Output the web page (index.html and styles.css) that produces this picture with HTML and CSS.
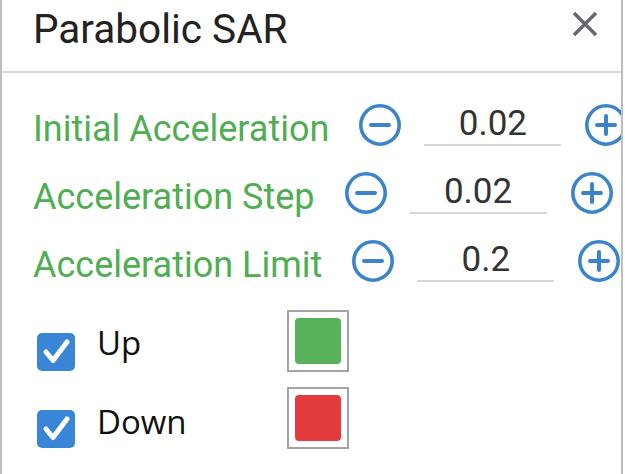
FILE: index.html
```html
<!DOCTYPE html>
<html lang="en">
<head>
<meta charset="utf-8">
<title>Parabolic SAR</title>
<link rel="stylesheet" href="styles.css">
</head>
<body>
<div class="panel">
  <header class="header">
    <h1 class="title">Parabolic SAR</h1>
    <button class="close" aria-label="Close">
      <svg width="26" height="26" viewBox="0 0 26 26"><path d="M2 2 L24 24 M24 2 L2 24" stroke="#66666e" stroke-width="3.4" fill="none"/></svg>
    </button>
  </header>
  <div class="content">
    <div class="params">
      <div class="param">
        <span class="label">Initial Acceleration</span>
        <button class="step" aria-label="Decrease"><svg width="42" height="42" viewBox="0 0 42 42"><circle cx="21" cy="21" r="19.2" fill="none" stroke="#3b84cc" stroke-width="3.6"/><path d="M12 21 H30" stroke="#3b84cc" stroke-width="4" stroke-linecap="round"/></svg></button>
        <div class="field">0.02</div>
        <button class="step" aria-label="Increase"><svg width="42" height="42" viewBox="0 0 42 42"><circle cx="21" cy="21" r="19.2" fill="none" stroke="#3b84cc" stroke-width="3.6"/><path d="M12 21 H30 M21 12 V30" stroke="#3b84cc" stroke-width="4" stroke-linecap="round"/></svg></button>
      </div>
      <div class="param">
        <span class="label">Acceleration Step</span>
        <button class="step" aria-label="Decrease"><svg width="42" height="42" viewBox="0 0 42 42"><circle cx="21" cy="21" r="19.2" fill="none" stroke="#3b84cc" stroke-width="3.6"/><path d="M12 21 H30" stroke="#3b84cc" stroke-width="4" stroke-linecap="round"/></svg></button>
        <div class="field">0.02</div>
        <button class="step" aria-label="Increase"><svg width="42" height="42" viewBox="0 0 42 42"><circle cx="21" cy="21" r="19.2" fill="none" stroke="#3b84cc" stroke-width="3.6"/><path d="M12 21 H30 M21 12 V30" stroke="#3b84cc" stroke-width="4" stroke-linecap="round"/></svg></button>
      </div>
      <div class="param">
        <span class="label">Acceleration Limit</span>
        <button class="step" aria-label="Decrease"><svg width="42" height="42" viewBox="0 0 42 42"><circle cx="21" cy="21" r="19.2" fill="none" stroke="#3b84cc" stroke-width="3.6"/><path d="M12 21 H30" stroke="#3b84cc" stroke-width="4" stroke-linecap="round"/></svg></button>
        <div class="field">0.2</div>
        <button class="step" aria-label="Increase"><svg width="42" height="42" viewBox="0 0 42 42"><circle cx="21" cy="21" r="19.2" fill="none" stroke="#3b84cc" stroke-width="3.6"/><path d="M12 21 H30 M21 12 V30" stroke="#3b84cc" stroke-width="4" stroke-linecap="round"/></svg></button>
      </div>
    </div>
    <div class="options">
      <div class="option">
        <label class="check">
          <span class="box"><svg width="38" height="38" viewBox="0 0 38 38"><path d="M9 19 L16 27.5 L30 9" stroke="#fff" stroke-width="5" fill="none" stroke-linecap="round" stroke-linejoin="round"/></svg></span>
          <span class="opt-label">Up</span>
        </label>
        <span class="swatch"><span class="swatch-fill up"></span></span>
      </div>
      <div class="option">
        <label class="check">
          <span class="box"><svg width="38" height="38" viewBox="0 0 38 38"><path d="M9 19 L16 27.5 L30 9" stroke="#fff" stroke-width="5" fill="none" stroke-linecap="round" stroke-linejoin="round"/></svg></span>
          <span class="opt-label down">Down</span>
        </label>
        <span class="swatch"><span class="swatch-fill down"></span></span>
      </div>
    </div>
  </div>
</div>
</body>
</html>
```

FILE: styles.css
```css
html, body {
  margin: 0;
  padding: 0;
  background: #fff;
}

.panel {
  width: 623px;
  height: 474px;
  box-sizing: border-box;
  border-left: 2px solid #bdbdbd;
  border-right: 2px solid #bdbdbd;
  overflow: hidden;
  font-family: Roboto, "Noto Sans", sans-serif;
}

.header {
  display: flex;
  justify-content: space-between;
  align-items: flex-start;
  height: 73px;
  box-sizing: border-box;
  padding: 6px 23px 0 31px;
  border-bottom: 2px solid #d9d9d9;
}

.title {
  margin: 0;
  font-size: 40.5px;
  line-height: 47px;
  font-weight: 400;
  color: #222;
}

.close {
  border: 0;
  background: none;
  padding: 0;
  margin-top: 5px;
  display: block;
  line-height: 0;
}

.params {
  display: flex;
  flex-direction: column;
  padding: 18px 0 0 31px;
}

.param {
  display: flex;
  align-items: center;
  height: 68px;
  white-space: nowrap;
}

.label {
  flex-shrink: 0;
  font-size: 36px;
  line-height: 42px;
  padding-top: 8px;
  color: #4fad52;
  margin-right: 30px;
}

.step {
  flex-shrink: 0;
  border: 0;
  background: none;
  padding: 0;
  display: block;
  line-height: 0;
}

.field {
  flex-shrink: 0;
  width: 137px;
  height: 42px;
  box-sizing: border-box;
  margin: 0 24px 0 23px;
  border-bottom: 2px solid #d6d6d6;
  text-align: center;
  font-size: 35px;
  line-height: 40px;
  color: #333;
}

.options {
  display: flex;
  flex-direction: column;
  gap: 15px;
  margin-top: 15px;
  padding-left: 35px;
}

.option {
  display: flex;
  align-items: flex-end;
}

.check {
  display: flex;
  align-items: flex-end;
  width: 250px;
  flex-shrink: 0;
}

.box {
  width: 38px;
  height: 38px;
  border-radius: 5px;
  background: #3a86d6;
  display: block;
  line-height: 0;
  margin-bottom: 1px;
}

.opt-label {
  margin-left: 22px;
  margin-bottom: 7px;
  font-family: "Open Sans", "Noto Sans", sans-serif;
  font-size: 33px;
  line-height: 44px;
  color: #111;
}

.opt-label.down {
  margin-bottom: 5px;
}

.swatch {
  width: 62px;
  height: 62px;
  box-sizing: border-box;
  border: 2px solid #a3a3a3;
  padding: 6px;
  display: block;
}

.swatch-fill {
  display: block;
  width: 46px;
  height: 46px;
  border-radius: 4px;
}

.swatch-fill.up {
  background: #57b25a;
}

.swatch-fill.down {
  background: #e33b3d;
}
```
